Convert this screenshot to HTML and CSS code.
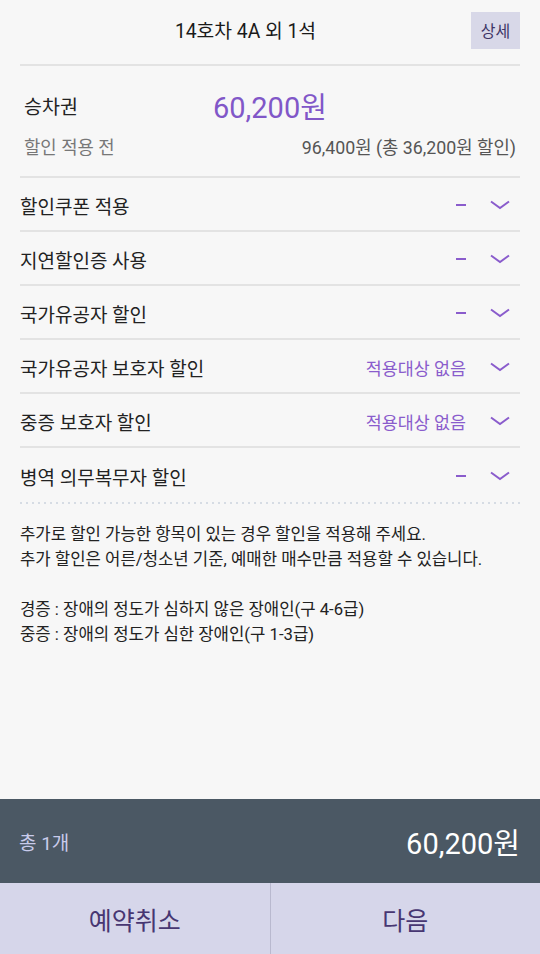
FILE: index.html
```html
<!DOCTYPE html>
<html lang="ko">
<head>
  <meta charset="UTF-8">
  <meta name="viewport" content="width=device-width, initial-scale=1.0">
  <title>할인 적용</title>
  <link rel="stylesheet" href="styles.css">
</head>
<body>
  <div class="page">
    <div class="content">
      <!-- Header -->
      <div class="top">
        <div class="top-title">14호차 4A 외 1석</div>
        <button class="detail-btn">상세</button>
      </div>

      <!-- Fare -->
      <div class="fare">
        <div class="fare-row">
          <span class="fare-label">승차권</span>
          <span class="fare-price">60,200원</span>
        </div>
        <div class="fare-sub">
          <span>할인 적용 전</span>
          <span class="fare-sub-value">96,400원 (총 36,200원 할인)</span>
        </div>
      </div>

      <!-- Discount options -->
      <ul class="options">
        <li class="option">
          <span class="option-name">할인쿠폰 적용</span>
          <span class="option-dash"></span>
          <svg class="chevron" viewBox="0 0 20 10"><polyline points="1,1.5 10,8 19,1.5"/></svg>
        </li>
        <li class="option">
          <span class="option-name">지연할인증 사용</span>
          <span class="option-dash"></span>
          <svg class="chevron" viewBox="0 0 20 10"><polyline points="1,1.5 10,8 19,1.5"/></svg>
        </li>
        <li class="option">
          <span class="option-name">국가유공자 할인</span>
          <span class="option-dash"></span>
          <svg class="chevron" viewBox="0 0 20 10"><polyline points="1,1.5 10,8 19,1.5"/></svg>
        </li>
        <li class="option">
          <span class="option-name">국가유공자 보호자 할인</span>
          <span class="option-value">적용대상 없음</span>
          <svg class="chevron" viewBox="0 0 20 10"><polyline points="1,1.5 10,8 19,1.5"/></svg>
        </li>
        <li class="option">
          <span class="option-name">중증 보호자 할인</span>
          <span class="option-value">적용대상 없음</span>
          <svg class="chevron" viewBox="0 0 20 10"><polyline points="1,1.5 10,8 19,1.5"/></svg>
        </li>
        <li class="option last">
          <span class="option-name">병역 의무복무자 할인</span>
          <span class="option-dash"></span>
          <svg class="chevron" viewBox="0 0 20 10"><polyline points="1,1.5 10,8 19,1.5"/></svg>
        </li>
      </ul>
      <div class="dotted"></div>

      <!-- Notice -->
      <div class="notice">
        <p>추가로 할인 가능한 항목이 있는 경우 할인을 적용해 주세요.<br>추가 할인은 어른/청소년 기준, 예매한 매수만큼 적용할 수 있습니다.</p>
        <p>경증 : 장애의 정도가 심하지 않은 장애인(구 4-6급)<br>중증 : 장애의 정도가 심한 장애인(구 1-3급)</p>
      </div>
    </div>

    <!-- Total -->
    <div class="total">
      <span class="total-count">총 1개</span>
      <span class="total-price">60,200원</span>
    </div>

    <!-- Actions -->
    <div class="actions">
      <button class="action-btn">예약취소</button>
      <button class="action-btn">다음</button>
    </div>
  </div>
</body>
</html>
```

FILE: styles.css
```css
/* General */
* {
  box-sizing: border-box;
}

body {
  margin: 0;
  font-family: Roboto, "Noto Sans CJK KR", sans-serif;
  background: #f7f7f7;
  color: #222;
}

.page {
  display: flex;
  flex-direction: column;
  height: 954px;
}

.content {
  flex: 1;
  padding: 0 20px;
}

/* Header */
.top {
  display: flex;
  align-items: center;
  height: 66px;
  padding-bottom: 4px;
  border-bottom: 2px solid #e3e3e3;
}

.top-title {
  flex: 1;
  text-align: center;
  font-size: 19.3px;
  color: #1a1a1a;
}

.detail-btn {
  width: 49px;
  height: 37px;
  border: none;
  padding: 0;
  background: #d8d8e8;
  color: #3d3566;
  font-family: inherit;
  font-size: 16px;
}

/* Fare */
.fare {
  height: 112px;
  padding: 23px 4px 0;
  border-bottom: 2px solid #e3e3e3;
}

.fare-row {
  display: flex;
  align-items: center;
  height: 32px;
}

.fare-label {
  width: 189px;
  font-size: 19.5px;
  color: #222;
}

.fare-price {
  font-size: 29px;
  color: #8157c8;
}

.fare-sub {
  display: flex;
  justify-content: space-between;
  margin-top: 12px;
  font-size: 17.8px;
  color: #777;
}

.fare-sub-value {
  color: #555;
}

/* Options */
.options {
  list-style: none;
  margin: 0;
  padding: 0;
}

.option {
  display: flex;
  align-items: center;
  height: 54px;
  padding: 2px 10px 0 0;
  border-bottom: 2px solid #e3e3e3;
}

.option.last {
  border-bottom: none;
}

.option-name {
  flex: 1;
  font-size: 19px;
  color: #222;
}

.option-dash {
  width: 10px;
  height: 2px;
  background: #8a5ccc;
}

.option-value {
  font-size: 17.4px;
  color: #8a5ccc;
}

.chevron {
  width: 20px;
  height: 10px;
  margin-left: 24px;
  fill: none;
  stroke: #8a5ccc;
  stroke-width: 2;
}

.dotted {
  height: 2px;
  background: repeating-linear-gradient(to right, #d6dce4 0 2px, transparent 2px 6px);
}

/* Notice */
.notice {
  padding-top: 18px;
  font-size: 16.7px;
  line-height: 25px;
  color: #222;
}

.notice p {
  margin: 0 0 25px;
}

/* Total */
.total {
  display: flex;
  justify-content: space-between;
  align-items: center;
  height: 84px;
  padding: 0 20px 0 19px;
  background: #4b5864;
}

.total-count {
  font-size: 19px;
  color: #c9cbeb;
}

.total-price {
  font-size: 29px;
  color: #fff;
}

/* Actions */
.actions {
  display: flex;
  height: 71px;
  background: #d6d6ea;
}

.action-btn {
  flex: 1;
  border: none;
  background: #d6d6ea;
  color: #473672;
  font-family: inherit;
  font-size: 25px;
}

.action-btn + .action-btn {
  border-left: 1px solid #b9b9cf;
}
```
